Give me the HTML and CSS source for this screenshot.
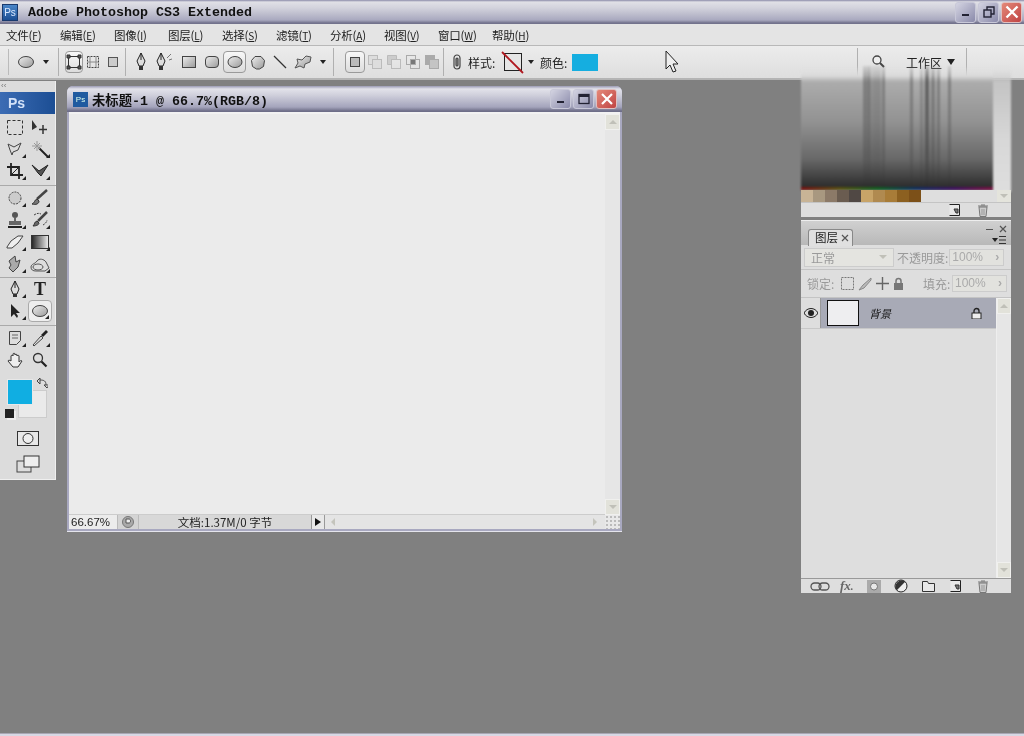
FILE: index.html
```html
<!DOCTYPE html>
<html lang="zh">
<head>
<meta charset="utf-8">
<title>Adobe Photoshop CS3 Extended</title>
<link rel="stylesheet" href="styles.css">
</head>
<body>
<div class="app">
  <header class="titlebar">
    <span class="ps-logo">Ps</span>
    <span class="app-title">Adobe Photoshop CS3 Extended</span>
    <span class="winbtns">
      <span class="wb"><svg width="12" height="12"><rect x="2" y="8" width="7" height="2" fill="#223"/></svg></span>
      <span class="wb"><svg width="14" height="14" fill="none" stroke="#223" stroke-width="1.4"><rect x="2" y="5" width="7" height="7"/><path d="M5 5V2h7v7H9"/></svg></span>
      <span class="wb close"><svg width="14" height="14" stroke="#fff" stroke-width="2.4"><path d="M1.5 1.5l11 11M12.5 1.5l-11 11"/></svg></span>
    </span>
  </header>

  <nav class="menubar">
    <span class="mi">文件(<u>F</u>)</span><span class="mi">编辑(<u>E</u>)</span><span class="mi">图像(<u>I</u>)</span><span class="mi">图层(<u>L</u>)</span><span class="mi">选择(<u>S</u>)</span><span class="mi">滤镜(<u>T</u>)</span><span class="mi">分析(<u>A</u>)</span><span class="mi">视图(<u>V</u>)</span><span class="mi">窗口(<u>W</u>)</span><span class="mi">帮助(<u>H</u>)</span>
  </nav>

  <div class="options">
    <span class="grip"></span>
    <span class="ob w26"><svg width="18" height="14"><ellipse cx="9" cy="7" rx="7.500" ry="5.500" fill="url(#g-shape)" stroke="#444"/></svg></span>
    <span class="ob w14"><i class="tri"></i></span>
    <span class="sep s1"></span>
    <span class="ob w18 on"><svg width="16" height="16" fill="none" stroke="#333"><rect x="2.500" y="2.500" width="11" height="11"/><path d="M1 1h3v3H1zM12 1h3v3h-3zM1 12h3v3H1zM12 12h3v3h-3z" fill="#555"/></svg></span>
    <span class="ob w20"><svg width="16" height="16" fill="none" stroke="#444"><rect x="2.500" y="2.500" width="11" height="11" stroke-dasharray="2 1"/><path d="M5 3v10M11 3v10M3 8h10" stroke="#888"/></svg></span>
    <span class="ob w20"><svg width="12" height="12"><rect x="1.500" y="1.500" width="9" height="9" fill="#ccc" stroke="#555"/></svg></span>
    <span class="sep s2"></span>
    <span class="ob w24"><svg width="14" height="20"><use href="#i-pen"/></svg></span>
    <span class="ob w24"><svg width="22" height="20"><use href="#i-pen"/><path d="M13 6l2-2M15 8l3-1M15 4l2-2" stroke="#777" fill="none"/></svg></span>
    <span class="ob w23"><svg width="16" height="14"><rect x="1.500" y="1.500" width="13" height="11" fill="url(#g-shape)" stroke="#444"/></svg></span>
    <span class="ob w23"><svg width="16" height="14"><rect x="1.500" y="1.500" width="13" height="11" rx="3.500" fill="url(#g-shape)" stroke="#444"/></svg></span>
    <span class="ob w23 on"><svg width="16" height="14"><ellipse cx="8" cy="7" rx="7" ry="5.500" fill="url(#g-shape)" stroke="#444"/></svg></span>
    <span class="ob w23"><svg width="16" height="15"><path d="M5 1.500h6l3.500 4-1 6-4 2.500h-3l-4-2.500-1-6z" fill="url(#g-shape)" stroke="#444"/></svg></span>
    <span class="ob w22"><svg width="16" height="16"><path d="M2 2l12 12" stroke="#333" stroke-width="1.300"/></svg></span>
    <span class="ob w24"><svg width="20" height="16"><path d="M2 14l3-5-1-4 5 1 4-4 5 1-1 5-5 2-1 4-4-2z" fill="url(#g-shape)" stroke="#555"/></svg></span>
    <span class="ob w16"><i class="tri"></i></span>
    <span class="sep s3"></span>
    <span class="ob w20 on"><svg width="12" height="12"><rect x="1.500" y="1.500" width="9" height="9" fill="#bbb" stroke="#444"/></svg></span>
    <span class="ob w19"><svg width="16" height="16" fill="#ddd" stroke="#bbb"><rect x="1.500" y="1.500" width="9" height="9"/><rect x="5.500" y="5.500" width="9" height="9"/></svg></span>
    <span class="ob w19"><svg width="16" height="16" fill="none" stroke="#bbb"><path d="M1.500 10.500v-9h9v4h-5v5z" fill="#ccc"/><rect x="5.500" y="5.500" width="9" height="9"/></svg></span>
    <span class="ob w19"><svg width="16" height="16" fill="none" stroke="#aaa"><rect x="1.500" y="1.500" width="9" height="9"/><rect x="5.500" y="5.500" width="9" height="9"/><rect x="6" y="6" width="4" height="4" fill="#777" stroke="none"/></svg></span>
    <span class="ob w19"><svg width="16" height="16" stroke="#aaa"><rect x="1.500" y="1.500" width="9" height="9" fill="#aaa"/><rect x="5.500" y="5.500" width="9" height="9" fill="#c4c4c4"/></svg></span>
    <span class="sep s4"></span>
    <span class="ob w22"><svg width="8" height="16" fill="none" stroke="#444" stroke-width="1.200"><rect x="1" y="1" width="6" height="14" rx="3"/><rect x="3" y="4" width="2" height="8" rx="1" fill="#999"/></svg></span>
    <span class="olabel w36">样式:</span>
    <svg class="style-swatch" width="24" height="24"><rect x="3.500" y="3.500" width="17" height="17" fill="#e6e6e6" stroke="#222"/><path d="M1 2l21 21" stroke="#b01820" stroke-width="1.800"/></svg>
    <span class="ob w16"><i class="tri"></i></span>
    <span class="olabel w32">颜色:</span>
    <span class="color-swatch"></span>
    <span class="opt-right">
      <span class="sep"></span>
      <span class="ob w38"><svg width="16" height="16" fill="none" stroke="#444" stroke-width="1.300"><circle cx="8" cy="6" r="4" fill="#eee"/><path d="M11 9l4 4" stroke-width="2"/></svg></span>
      <span class="workspace-label">工作区</span>
      <span class="ob w20"><i class="tri big"></i></span>
      <span class="sep s5"></span>
    </span>
  </div>

  <main class="desk">
    <aside class="tools">
      <div class="tools-grip">‹‹</div>
      <div class="ps-band">Ps</div>
      <div class="tgrid">
        <span class="t"><svg width="16" height="15" fill="none" stroke="#333" stroke-dasharray="3 2"><rect x=".5" y=".5" width="15" height="14"/></svg></span>
        <span class="t"><svg width="18" height="16"><path d="M1 1v10l5-3z" fill="#333"/><path d="M12 6v9M8 10.500h8" stroke="#333" stroke-width="1.500"/></svg></span>
        <span class="t m"><svg width="18" height="16" fill="none" stroke="#444"><path d="M2 3l6 3 7-4-3 7-5 2-1 3-2-5z"/></svg></span>
        <span class="t m"><svg width="18" height="18"><path d="M8 8l9 9" stroke="#222" stroke-width="2"/><path d="M6 1v10M1 6h10M3 3l6 6M9 3L3 9" stroke="#999"/></svg></span>
        <span class="t m"><svg width="16" height="16" fill="none" stroke="#222" stroke-width="1.800"><path d="M4 0v12h12M0 4h12v12"/><path d="M4 12l8-8" stroke-width="1"/></svg></span>
        <span class="t m"><svg width="20" height="16"><path d="M2 2l7 6 9-6-7 11-3-3z" fill="#555" stroke="#222"/></svg></span>
        <span class="tsep a"></span>
        <span class="t m"><svg width="16" height="16" fill="#ccc" stroke="#444" stroke-dasharray="2 1"><circle cx="8" cy="8" r="6"/></svg></span>
        <span class="t m"><svg width="18" height="18"><path d="M16 1L6 10" stroke="#444" stroke-width="2.500"/><path d="M6 10c-3 1-2 4-5 5 4 1 7 0 7-3z" fill="#777" stroke="#333"/></svg></span>
        <span class="t m"><svg width="16" height="18"><circle cx="8" cy="4" r="3" fill="#555"/><path d="M7 7h2v3H7zM2 10h12v4H2z" fill="#666"/><path d="M1 15h14v2H1z" fill="#222"/></svg></span>
        <span class="t m"><svg width="18" height="18" fill="none"><path d="M16 1L7 10" stroke="#444" stroke-width="2.500"/><path d="M6 10c-3 1-2 3-4 5 3 0 6-1 6-3z" fill="#666" stroke="#333"/><path d="M3 4c3-2 5-2 7-1M12 14c2-1 4-3 4-5" stroke="#444" stroke-dasharray="2 1"/></svg></span>
        <span class="t m"><svg width="18" height="14"><path d="M1 12l4-6 7-5h5l-5 7-6 5H1z" fill="#eee" stroke="#444"/></svg></span>
        <span class="t m"><svg width="18" height="14"><rect x=".5" y=".5" width="17" height="13" fill="url(#g-grad)" stroke="#333"/></svg></span>
        <span class="t m"><svg width="18" height="18"><path d="M3 6l6-5 1 6 4-2-2 7-5 5-4-4 2-3z" fill="#aaa" stroke="#444"/></svg></span>
        <span class="t m"><svg width="20" height="16" fill="#ddd" stroke="#555"><path d="M1 11c0-3 4-3 6-6 2-3 7-2 9 1l3 6-4 3H6c-3 0-5-1-5-4z"/><ellipse cx="8" cy="11" rx="5" ry="3"/></svg></span>
        <span class="tsep b"></span>
        <span class="t m"><svg width="14" height="18"><path d="M7 1L3 9l2 5h4l2-5z" fill="#ddd" stroke="#222"/><path d="M5 14h4v3H5z" fill="#333"/><path d="M7 1v7" stroke="#222"/></svg></span>
        <span class="t type">T</span>
        <span class="t m"><svg width="12" height="16"><path d="M2 1v13l3-3 3 4 1-2-2-3h4z" fill="#222"/></svg></span>
        <span class="t on m"><svg width="18" height="14"><ellipse cx="9" cy="7" rx="7.500" ry="5.500" fill="url(#g-shape)" stroke="#444"/></svg></span>
        <span class="tsep c"></span>
        <span class="t m"><svg width="14" height="16" fill="#ddd" stroke="#444"><path d="M1.500 1.500h11v9l-4 4h-7z"/><path d="M4 5h6M4 8h6" stroke="#666"/></svg></span>
        <span class="t m"><svg width="18" height="18"><path d="M2 16l8-9 2 2-9 8z" fill="#ddd" stroke="#444"/><path d="M10 6l5-5 2 2-5 5z" fill="#222"/></svg></span>
        <span class="t"><svg width="18" height="17"><path d="M5 9V4c0-1 2-1 2 0V2c0-1 2-1 2 0v1c0-1 2-1 2 0v1c0-1 2-1 2 0v6c1-1 2-2 3-1l-4 6H7L2 9c0-1 2-1 3 0z" fill="#eee" stroke="#333"/></svg></span>
        <span class="t"><svg width="16" height="16" fill="none"><circle cx="6" cy="6" r="4.500" fill="#ddd" stroke="#333" stroke-width="1.300"/><path d="M9.500 9.500l5 5" stroke="#222" stroke-width="2.200"/></svg></span>
      </div>
      <div class="colors">
        <span class="bg-c"></span>
        <span class="fg-c"></span>
        <svg class="swap" width="12" height="12" fill="none" stroke="#444"><path d="M1 4l3-3v6zM4 3c4 0 6 1 6 5M11 11L8 8h5z" fill="none"/></svg>
        <span class="mini"></span>
      </div>
      <div class="qmask"><svg width="22" height="15"><rect x=".5" y=".5" width="21" height="14" fill="#e8e8e8" stroke="#333"/><circle cx="11" cy="7.500" r="5" fill="#eee" stroke="#333"/></svg></div>
      <div class="screen"><svg width="24" height="18"><rect x="1" y="6" width="14" height="11" fill="#ddd" stroke="#444"/><rect x="8" y="1" width="15" height="11" fill="#eee" stroke="#333"/></svg></div>
    </aside>

    <section class="docwin">
      <div class="doc-title">
        <span class="doc-ico">Ps</span>
        <span class="doc-name">未标题-1 @ 66.7%(RGB/8)</span>
        <span class="winbtns small">
          <span class="wb"><svg width="10" height="10"><rect x="1" y="7" width="7" height="2" fill="#223"/></svg></span>
          <span class="wb"><svg width="12" height="12" fill="none" stroke="#223" stroke-width="1.300"><rect x="1" y="1.500" width="10" height="9"/><path d="M1 3h10" stroke-width="2"/></svg></span>
          <span class="wb close"><svg width="12" height="12" stroke="#fff" stroke-width="2.200"><path d="M1 1l10 10M11 1L1 11"/></svg></span>
        </span>
      </div>
      <div class="doc-mid">
        <div class="canvas"></div>
        <div class="vscroll">
          <span class="sb-btn"><i class="chev up"></i></span>
          <span class="sb-btn"><i class="chev down"></i></span>
        </div>
      </div>
      <div class="doc-status">
        <span class="zoom-val">66.67%</span>
        <span class="st-ico"><svg width="12" height="12"><circle cx="6" cy="6" r="5.500" fill="#aaa" stroke="#777"/><path d="M4 3h3c2 0 2 4 0 4H4z" fill="#eee" stroke="#555"/></svg></span>
        <span class="doc-size">文档:1.37M/0 字节</span>
        <span class="st-arrow"><i></i></span>
        <span class="hscroll"><i class="chev left"></i><i class="chev right"></i></span>
        <span class="corner"></span>
      </div>
    </section>
  </main>

  <div class="smear">
    <svg width="218" height="126" viewBox="0 0 218 126">
      <defs>
        <linearGradient id="g-smear" x1="0" y1="0" x2="0" y2="1">
          <stop offset="0" stop-color="#e4e4e4" stop-opacity="0"/>
          <stop offset=".08" stop-color="#dadada"/>
          <stop offset=".13" stop-color="#acacac"/>
          <stop offset=".45" stop-color="#929292"/>
          <stop offset=".75" stop-color="#686868"/>
          <stop offset=".97" stop-color="#2e2e2e"/>
          <stop offset="1" stop-color="#2c2c2c"/>
        </linearGradient>
        <linearGradient id="g-right" x1="0" y1="0" x2="0" y2="1">
          <stop offset="0" stop-color="#e4e4e4" stop-opacity="0"/>
          <stop offset=".13" stop-color="#c4c4c4"/>
          <stop offset=".6" stop-color="#d8d8d8"/>
          <stop offset="1" stop-color="#dedede"/>
        </linearGradient>
        <linearGradient id="g-stripe" x1="0" y1="0" x2="0" y2="1">
          <stop offset="0" stop-color="#222" stop-opacity=".1"/>
          <stop offset=".1" stop-color="#222" stop-opacity=".32"/>
          <stop offset=".7" stop-color="#222" stop-opacity=".2"/>
          <stop offset="1" stop-color="#222" stop-opacity=".04"/>
        </linearGradient>
        <linearGradient id="g-rainbow" x1="0" y1="0" x2="1" y2="0">
          <stop offset="0" stop-color="#7a1010"/>
          <stop offset=".2" stop-color="#5a5010"/>
          <stop offset=".4" stop-color="#106020"/>
          <stop offset=".6" stop-color="#103060"/>
          <stop offset=".8" stop-color="#401060"/>
          <stop offset="1" stop-color="#7a1040"/>
        </linearGradient>
      </defs>
      <rect x="8" width="192" height="124" fill="url(#g-smear)"/>
      <rect x="200" width="18" height="126" fill="url(#g-right)"/>
      <g fill="url(#g-stripe)">
        <rect x="70" width="7" height="121"/><rect x="76" width="5" height="121" opacity=".6"/>
        <rect x="81" width="7" height="121" opacity=".7"/><rect x="89" width="3" height="121"/>
        <rect x="117" width="3" height="121"/><rect x="127" width="3" height="121" opacity=".7"/>
        <rect x="132" width="4" height="121"/><rect x="132" width="4" height="121"/>
        <rect x="138" width="4" height="121"/><rect x="144" width="3" height="121"/>
        <rect x="155" width="3" height="121"/>
      </g>
      <rect x="8" y="121" width="192" height="3" fill="url(#g-rainbow)"/>
    </svg>
  </div>

  <section class="swatches-panel">
    <div class="sw-row">
      <i class="c1"></i><i class="c2"></i><i class="c3"></i><i class="c4"></i><i class="c5"></i><i class="c6"></i><i class="c7"></i><i class="c8"></i><i class="c9"></i><i class="c10"></i>
    </div>
    <div class="panel-foot top">
      <svg width="12" height="12"><use href="#i-new"/></svg>
      <svg width="12" height="13"><use href="#i-trash"/></svg>
    </div>
    <span class="sw-down"><i class="chev down"></i></span>
  </section>

  <section class="layers">
    <div class="l-head">
      <span class="l-tab">图层 <svg width="8" height="8" stroke="#555" stroke-width="1.200"><path d="M1 1l6 6M7 1L1 7"/></svg></span>
      <svg class="l-ctl" width="22" height="8" stroke="#555" stroke-width="1.200"><path d="M1 4.500h7M15 1l6 6M21 1l-6 6"/></svg>
      <svg class="l-menu" width="15" height="10"><path d="M0 3h6L3 7z" fill="#222"/><path d="M7 1.500h7M7 5h7M7 8.500h7" stroke="#333"/></svg>
    </div>
    <div class="l-blend">
      <span class="sel">正常<i class="chev down"></i></span>
      <span class="dis">不透明度:</span>
      <span class="pct">100%<b>›</b></span>
    </div>
    <div class="l-lock">
      <span class="dis lbl">锁定:</span>
      <svg width="13" height="13"><rect x=".5" y=".5" width="12" height="12" fill="#ddd" stroke="#777" stroke-dasharray="2 1"/></svg>
      <svg width="14" height="14"><path d="M13 1L5 8l-4 5 5-2 7-8z" fill="#bbb" stroke="#888"/></svg>
      <svg width="13" height="13" stroke="#666" stroke-width="1.400"><path d="M6.500 0v13M0 6.500h13"/></svg>
      <svg width="11" height="13"><path d="M3 6V4a2.500 2.500 0 015 0v2" fill="none" stroke="#777" stroke-width="1.500"/><rect x="1" y="6" width="9" height="7" fill="#777"/></svg>
      <span class="dis fill">填充:</span>
      <span class="pct">100%<b>›</b></span>
    </div>
    <div class="l-body">
      <div class="l-list">
        <div class="l-row">
          <span class="eye"><svg width="14" height="10"><path d="M0 5c3-6 11-6 14 0-3 6-11 6-14 0z" fill="#ddd" stroke="#222"/><circle cx="7" cy="5" r="3" fill="#222"/></svg></span>
          <span class="thumb"></span>
          <span class="l-name">背景</span>
          <svg class="l-lockico" width="11" height="12"><path d="M3 6V4a2.500 2.500 0 015 0v2" fill="none" stroke="#222" stroke-width="1.300"/><rect x="1" y="6" width="9" height="6" fill="#eee" stroke="#222"/></svg>
        </div>
      </div>
      <div class="vscroll l">
        <span class="sb-btn"><i class="chev up"></i></span>
        <span class="sb-btn"><i class="chev down"></i></span>
      </div>
    </div>
    <div class="panel-foot lf">
      <svg width="20" height="9" fill="none" stroke="#555" stroke-width="1.300"><rect x="1" y="1" width="10" height="7" rx="3.500"/><rect x="9" y="1" width="10" height="7" rx="3.500"/></svg>
      <span class="fx">fx<small>.</small></span>
      <svg width="14" height="13"><rect width="14" height="13" fill="#aaa"/><circle cx="7" cy="6.500" r="3.500" fill="#e8e8e8" stroke="#777"/></svg>
      <svg width="14" height="14"><circle cx="7" cy="7" r="6" fill="#eee" stroke="#222"/><path d="M2.800 11.200A6 6 0 0111.200 2.800z" fill="#333"/></svg>
      <svg width="13" height="11" fill="#e8e8e8" stroke="#333"><path d="M.5 10.500v-10h5l1 2h6v8z"/></svg>
      <svg width="12" height="12"><use href="#i-new"/></svg>
      <svg width="12" height="13"><use href="#i-trash"/></svg>
    </div>
  </section>

  <svg class="cursor" width="14" height="23"><path d="M1 1v18l4-4 3 7 3-1-3-7h5z" fill="#eee" stroke="#222"/></svg>
</div>

<svg class="defs" width="0" height="0">
  <defs>
    <linearGradient id="g-shape" x1="0" y1="0" x2="1" y2="1"><stop offset="0" stop-color="#eee"/><stop offset="1" stop-color="#999"/></linearGradient>
    <linearGradient id="g-grad" x1="0" y1="0" x2="1" y2="0"><stop offset="0" stop-color="#222"/><stop offset="1" stop-color="#eee"/></linearGradient>
    <symbol id="i-pen" width="14" height="20" viewBox="0 0 14 20"><path d="M7 1L3 9l2 5h4l2-5z" fill="#ddd" stroke="#222"/><path d="M5 14h4v4H5z" fill="#333"/><path d="M7 1v7" stroke="#222"/></symbol>
    <symbol id="i-new" width="12" height="12" viewBox="0 0 12 12"><path d="M.5.500h10v10H.5z" fill="#e8e8e8"/><path d="M.5.500h10M10.500.500v11H.5" fill="none" stroke="#222"/><path d="M5 5h4v4H7z" fill="#777" stroke="#333"/></symbol>
    <symbol id="i-trash" width="12" height="13" viewBox="0 0 12 13"><path d="M2 3h8l-1 9.500H3zM1 2h10M4 1h4" fill="#ccc" stroke="#777"/><path d="M5 5v6M7 5v6" stroke="#999"/></symbol>
  </defs>
</svg>
</body>
</html>
```

FILE: styles.css
```css
* { box-sizing: border-box; }
html, body { margin: 0; padding: 0; }
body { width: 1024px; height: 736px; overflow: hidden; background: #808080; font-family: "Noto Sans CJK SC", "Liberation Sans", sans-serif; font-size: 12px; color: #222; }
.defs { position: absolute; }
.app { position: relative; width: 1024px; height: 736px; display: flex; flex-direction: column; overflow: hidden; filter: blur(.3px); }

/* main title bar */
.titlebar { height: 24px; flex: none; display: flex; align-items: center; padding: 0 2px; background: linear-gradient(#8a8aa8 0, #e0e0e6 2px, #d2d2dc 8px, #a9a9bf 20px, #72728c 23px); }
.ps-logo { width: 16px; height: 17px; background: linear-gradient(#4a86c8, #1c4e94); color: #dbe8ff; font: 10px "Liberation Sans", sans-serif; display: flex; align-items: center; justify-content: center; border: 1px solid #1a3a6e; }
.app-title { margin-left: 10px; font: bold 13.33px "Liberation Mono", monospace; color: #111; }
.winbtns { margin-left: auto; display: flex; gap: 2px; }
.wb { width: 21px; height: 21px; border-radius: 3px; border: 1px solid #c8c8d8; background: linear-gradient(135deg, #d4d4e2, #8a8aaa); display: flex; align-items: center; justify-content: center; }
.wb.close { background: linear-gradient(135deg, #e48878, #c04444); border-color: #e0c0c0; }

/* menu */
.menubar { height: 22px; flex: none; display: flex; align-items: center; padding: 1px 0 0 6px; background: #e4e4e4; border-bottom: 1px solid #b8b8b8; }
.mi { width: 54px; font-size: 11.5px; line-height: 20px; white-space: nowrap; color: #222; letter-spacing: -.2px; }
.mi u { font-size: 10px; }

/* options bar */
.options { height: 34px; flex: none; display: flex; align-items: center; background: linear-gradient(#ececec, #dedede); border-bottom: 2px solid #b4b4b4; padding-left: 8px; }
.grip { width: 1px; height: 26px; border-left: 1px solid #bbb; margin-right: 4px; flex: none; }
.sep { width: 1px; height: 28px; background: #b0b0b0; flex: none; }
.s1 { margin: 0 6px 0 5px; }
.s2 { margin: 0 3px 0 2px; }
.s3 { margin: 0 11px 0 2px; }
.s4 { margin: 0 2px 0 2px; }
.s5 { margin-left: 5px; }
.ob { height: 22px; display: flex; align-items: center; justify-content: center; flex: none; }
.ob.on { border: 1px solid #9a9a9a; border-radius: 4px; background: linear-gradient(#f8f8f8, #dcdcdc); }
.w14 { width: 14px; } .w16 { width: 16px; } .w18 { width: 18px; } .w19 { width: 19px; } .w20 { width: 20px; } .w22 { width: 22px; } .w23 { width: 23px; } .w24 { width: 24px; } .w26 { width: 26px; } .w38 { width: 38px; }
.tri { width: 0; height: 0; border: 3px solid transparent; border-top: 4px solid #222; border-bottom: 0; }
.tri.big { border-width: 4px; border-top-width: 6px; border-bottom: 0; }
.olabel { font-size: 12px; flex: none; color: #222; white-space: nowrap; }
.w36 { width: 33px; } .w32 { width: 32px; margin-left: 1px; }
.style-swatch { flex: none; margin: 0 -2px 0 0; }
.color-swatch { width: 26px; height: 17px; flex: none; background: #15aee0; }
.opt-right { margin-left: 259px; display: flex; align-items: center; }
.workspace-label { width: 35px; font-size: 12px; margin-left: 10px; white-space: nowrap; }

/* desktop */
.desk { position: relative; flex: 1; background: #808080; border-bottom: 2px solid #d8d8e4; box-shadow: inset 0 -1px 0 #a8a8b4; }
.tools { position: absolute; left: 0; top: 1px; width: 56px; height: 399px; background: #dcdcdc; border-right: 1px solid #efefef; border-bottom: 1px solid #efefef; display: flex; flex-direction: column; }
.tools-grip { height: 11px; font: 8px/10px "Liberation Sans", sans-serif; color: #777; padding-left: 1px; }
.ps-band { height: 22px; flex: none; background: linear-gradient(90deg, #3c6cb4, #1c4e94); color: #d4e2f8; font: bold 14px/22px "Liberation Sans", sans-serif; padding-left: 8px; }
.tgrid { display: grid; grid-template-columns: 26px 24px; padding: 2px 0 0 2px; }
.t { height: 22px; display: flex; align-items: center; justify-content: center; position: relative; }
.t.m::after { content: ""; position: absolute; right: 2px; bottom: 2px; border: 2px solid transparent; border-right-color: #222; border-bottom-color: #222; }
.t.on { border: 1px solid #aaa; border-radius: 4px; background: #eee; }
.type { font: bold 18px "Liberation Serif", serif; color: #222; }
.tsep { grid-column: 1 / 3; height: 1px; width: 56px; background: #aaa; margin-left: -2px; }
.tsep.a { margin-top: 3px; margin-bottom: 1px; }
.tsep.b { margin-top: 2px; margin-bottom: 0; }
.tsep.c { margin-top: 3px; margin-bottom: 1px; }
.colors { position: relative; height: 50px; flex: none; margin-top: 6px; }
.fg-c { position: absolute; left: 7px; top: 2px; width: 26px; height: 26px; background: #10aee2; border: 1px solid #e8e8e8; }
.bg-c { position: absolute; left: 18px; top: 13px; width: 29px; height: 28px; background: #eaeaea; border: 1px solid #ccc; }
.swap { position: absolute; left: 36px; top: 0; }
.mini { position: absolute; left: 5px; top: 32px; width: 9px; height: 9px; background: #222; box-shadow: 2px 2px 0 #eee; }
.qmask { display: flex; justify-content: center; padding-left: 1px; margin-top: 4px; }
.screen { display: flex; justify-content: center; margin-top: 9px; padding-left: 1px; }

/* doc window */
.docwin { position: absolute; left: 67px; top: 6px; width: 555px; height: 445px; display: flex; flex-direction: column; border: 2px solid #a8a8c0; border-top: 0; border-radius: 6px 6px 0 0; background: #d8d8d8; box-shadow: 0 1px 0 #e4e4ec; }
.doc-title { height: 26px; flex: none; display: flex; align-items: center; padding: 0 1px 0 4px; background: linear-gradient(#9a9ab4 0, #e2e2ea 3px, #d0d0dc 9px, #a4a4bc 21px, #6e6e88 25px); border-radius: 6px 6px 0 0; margin: 0 -2px; }
.doc-ico { width: 15px; height: 15px; margin-left: 2px; background: #1f5aa0; color: #dfe; font: 8px/15px "Liberation Sans", sans-serif; text-align: center; }
.doc-name { margin-left: 4px; font: bold 13.33px "Liberation Mono", "Noto Sans CJK SC", monospace; color: #111; white-space: nowrap; }
.winbtns.small { gap: 2px; padding-right: 4px; }
.winbtns.small .wb { width: 21px; height: 20px; }
.doc-mid { flex: 1; display: flex; padding-top: 2px; background: #f2f2f2; min-height: 0; }
.canvas { flex: 1; background: #ebebeb; border-bottom: 1px solid #ccc; }
.vscroll { width: 15px; flex: none; display: flex; flex-direction: column; justify-content: space-between; background: #e6e6e6; }
.sb-btn { height: 16px; background: #e2e2da; border: 1px solid #f0f0ee; display: flex; align-items: center; justify-content: center; }
.chev { width: 0; height: 0; border: 4px solid transparent; flex: none; }
.chev.up { border-top: 0; border-bottom: 4px solid #c0c0b8; }
.chev.down { border-bottom: 0; border-top: 4px solid #c0c0b8; }
.chev.left { border-left: 0; border-right: 4px solid #c4c4bc; }
.chev.right { border-right: 0; border-left: 4px solid #c4c4bc; }
.doc-status { height: 14px; flex: none; display: flex; align-items: center; font-size: 11px; background: #d8d8d8; color: #222; }
.zoom-val { width: 48px; padding-left: 2px; height: 14px; line-height: 14px; font-family: "Liberation Sans", sans-serif; background: #ececec; font-size: 11.5px; }
.st-ico { width: 22px; height: 14px; display: flex; align-items: center; justify-content: center; background: #d4d4d4; border: 1px solid #bbb; border-width: 0 1px; }
.doc-size { width: 172px; text-align: center; height: 14px; line-height: 14px; font-size: 11.5px; white-space: nowrap; }
.st-arrow { width: 14px; height: 14px; background: #e8e8e8; border: 1px solid #999; border-width: 0 1px; display: flex; align-items: center; justify-content: center; }
.st-arrow i { border: 4px solid transparent; border-left: 6px solid #111; border-right: 0; }
.hscroll { flex: 1; height: 14px; display: flex; align-items: center; justify-content: space-between; background: #e4e4e4; padding: 0 8px 0 6px; }
.corner { width: 15px; height: 14px; background: radial-gradient(#bbb 1px, transparent 1px) 0 0 / 4px 4px #e8e8e8; }

/* smear artifact over panel dock */
.smear { position: absolute; left: 793px; top: 66px; width: 218px; height: 126px; filter: blur(1px); }
.smear svg { display: block; }

/* swatches */
.swatches-panel { position: absolute; left: 801px; top: 190px; width: 210px; height: 27px; background: #dedede; }
.sw-row { height: 12px; display: flex; }
.sw-row i { width: 12px; height: 12px; display: block; }
.c1 { background: #c8b496; } .c2 { background: #a89880; } .c3 { background: #8c7a68; } .c4 { background: #6a5c50; } .c5 { background: #504844; }
.c6 { background: #c8a468; } .c7 { background: #b08a50; } .c8 { background: #a87c38; } .c9 { background: #8c6020; } .c10 { background: #7c5018; }
.panel-foot { height: 15px; display: flex; align-items: center; flex: none; border-top: 1px solid #c4c4c4; background: #dedede; }
.panel-foot.top { justify-content: flex-end; gap: 16px; padding-right: 22px; }
.sw-down { position: absolute; right: 0; top: 0; width: 14px; height: 12px; display: flex; align-items: center; justify-content: center; background: #e4e4dc; }

/* layers */
.layers { position: absolute; left: 801px; top: 220px; width: 210px; height: 373px; background: #dedede; display: flex; flex-direction: column; }
.l-head { height: 25px; flex: none; position: relative; background: linear-gradient(#d0d0d0, #b8b8b8); border-top: 1px solid #eee; }
.l-tab { position: absolute; left: 7px; top: 8px; width: 45px; height: 17px; background: #e0e0e0; border: 1px solid #888; border-bottom: 0; border-radius: 3px 3px 0 0; font-size: 11.5px; line-height: 15px; padding-left: 6px; white-space: nowrap; }
.l-ctl { position: absolute; right: 4px; top: 4px; }
.l-menu { position: absolute; right: 4px; top: 14px; }
.l-blend { height: 25px; flex: none; display: flex; align-items: center; padding-left: 3px; border-bottom: 1px solid #c4c4c4; }
.sel { width: 90px; height: 19px; display: flex; align-items: center; justify-content: space-between; padding: 0 6px; background: #e4e4e0; border: 1px solid #ccc; color: #999; font-size: 12px; }
.dis { color: #999; font-size: 12px; white-space: nowrap; }
.l-blend .dis { margin-left: 3px; }
.pct { width: 55px; height: 17px; flex: none; margin-left: 1px; display: flex; justify-content: space-between; padding: 0 4px 0 2px; background: #e2e2de; border: 1px solid #ccc; color: #aaa; font: 12px/15px "Liberation Sans", sans-serif; }
.l-lock { height: 28px; flex: none; display: flex; align-items: center; padding-left: 6px; gap: 4px; border-bottom: 1px solid #c4c4c4; }
.l-lock .lbl { width: 29px; margin-right: 1px; }
.l-lock .fill { margin-left: 15px; width: 28px; margin-right: -4px; }
.l-body { flex: 1; display: flex; min-height: 0; }
.l-list { flex: 1; background: #dedede; border-right: 1px solid #eee; }
.l-row { height: 31px; display: flex; align-items: center; background: #a8aab6; border-bottom: 1px solid #c8c8c8; }
.eye { width: 20px; height: 30px; display: flex; align-items: center; justify-content: center; background: #dedede; border-right: 1px solid #999; }
.thumb { width: 32px; height: 26px; margin-left: 6px; background: #eeeef0; border: 1px solid #111; }
.l-name { margin-left: 10px; font-style: italic; font-size: 11px; color: #111; }
.l-lockico { margin-left: auto; margin-right: 14px; }
.vscroll.l { width: 14px; }
.panel-foot.lf { display: grid; grid-template-columns: repeat(7, 27.2px); justify-items: center; align-items: center; padding-left: 5px; border-top: 1px solid #999; }
.fx { font: italic bold 13px/14px "Liberation Serif", serif; color: #666; }
.cursor { position: absolute; left: 665px; top: 50px; }
```
